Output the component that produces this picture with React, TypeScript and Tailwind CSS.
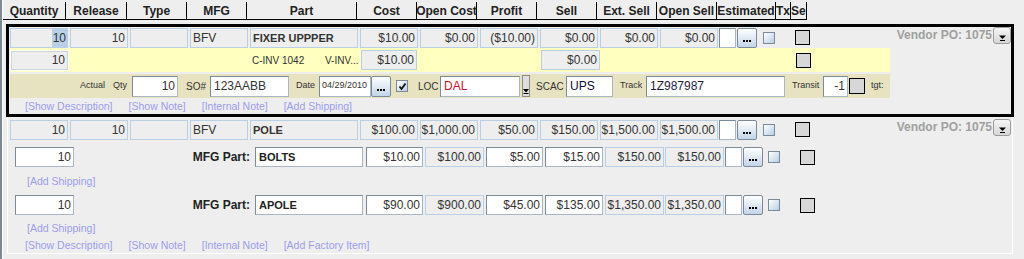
import React from "react";

const FONT = "font-['Liberation_Sans',Arial,sans-serif]";

interface BoxProps {
  w: string;
  children?: React.ReactNode;
  left?: boolean;
  bold?: boolean;
}

// gray read-only cell with light blue border
const Cell: React.FC<BoxProps> = ({ w, children, left, bold }) => (
  <div
    className={`${w} h-[20px] shrink-0 border border-[#b8cfe5] bg-[#eeeeee] flex items-center whitespace-nowrap overflow-hidden text-[#333] ${
      left ? "justify-start pl-[2px]" : "justify-end pr-[2px]"
    } ${bold ? "text-[11px] font-bold" : "text-[12px]"}`}
  >
    {children}
  </div>
);

// white editable field
const Field: React.FC<BoxProps & { h?: string; extra?: string }> = ({ w, children, left, bold, h = "h-[20px]", extra = "" }) => (
  <div
    className={`${w} ${h} shrink-0 bg-white border border-[#7a8a99] border-r-[#a9b6c3] border-b-[#a9b6c3] flex items-center whitespace-nowrap overflow-hidden ${
      left ? "justify-start pl-[3px]" : "justify-end pr-[2px]"
    } ${bold ? "text-[11px] font-bold text-[#222]" : "text-[12px] text-[#333]"} ${extra}`}
  >
    {children}
  </div>
);

const DotsButton: React.FC<{ h?: string }> = ({ h = "h-[20px]" }) => (
  <div
    className={`w-[20px] ${h} shrink-0 rounded-[2px] border border-[#7a8a99] bg-linear-to-b from-white to-[#c3d5e9] flex items-end justify-center pb-[5px] gap-[1px]`}
  >
    <span className="w-[2px] h-[2px] bg-black" />
    <span className="w-[2px] h-[2px] bg-black" />
    <span className="w-[2px] h-[2px] bg-black" />
  </div>
);

const CheckBox: React.FC<{ checked?: boolean }> = ({ checked }) => (
  <div className="w-[12px] h-[12px] shrink-0 border border-[#7a8a99] bg-linear-to-br from-white to-[#b8cfe5] flex items-center justify-center">
    {checked && (
      <svg width="9" height="9" viewBox="0 0 9 9">
        <path d="M1.5 4.5 L3.5 7 L7.5 1.5" stroke="#111" strokeWidth="1.8" fill="none" />
      </svg>
    )}
  </div>
);

const GraySquare: React.FC<{ size?: string }> = ({ size = "w-[15px] h-[15px]" }) => (
  <div className={`${size} shrink-0 border border-black bg-[#d7d7d7]`} />
);

const VendorDrop: React.FC = () => (
  <div className="w-[18px] h-[17px] mt-[-1px] shrink-0 rounded-[3px] border border-[#9c9c9c] bg-linear-to-b from-[#f6f6f6] to-[#d6d6d6] flex items-end justify-center pb-[2px]">
    <svg width="9" height="6" viewBox="0 0 9 6">
      <path d="M1 0.5 H8 L4.5 4 Z" fill="#000" />
      <rect x="2" y="5" width="5" height="1" fill="#000" />
    </svg>
  </div>
);

const Vendor: React.FC = () => (
  <div className="ml-auto flex items-start gap-[1px]">
    <span className="text-[12px] leading-[14px] font-bold text-[#a0a0a0] whitespace-nowrap">Vendor PO: 1075</span>
    <VendorDrop />
  </div>
);

const LINK = "text-[10.5px] leading-[14px] text-[#9c9cf0] whitespace-nowrap";

const HEADERS: { label: string; w: string; left?: boolean }[] = [
  { label: "Quantity", w: "w-[63px]" },
  { label: "Release", w: "w-[61px]" },
  { label: "Type", w: "w-[60px]" },
  { label: "MFG", w: "w-[60px]" },
  { label: "Part", w: "w-[110px]" },
  { label: "Cost", w: "w-[60px]" },
  { label: "Open Cost", w: "w-[60px]" },
  { label: "Profit", w: "w-[60px]" },
  { label: "Sell", w: "w-[60px]" },
  { label: "Ext. Sell", w: "w-[60px]" },
  { label: "Open Sell", w: "w-[60px]" },
  { label: "Estimated", w: "w-[59px]" },
  { label: "Tx", w: "w-[15px]", left: true },
  { label: "Se", w: "w-[16px]", left: true },
];

const Header: React.FC = () => (
  <div className="flex h-[20px] w-[804px] pt-[2px] border-b border-black shrink-0">
    {HEADERS.map((h) => (
      <div
        key={h.label}
        className={`${h.w} h-full shrink-0 border-r border-black flex items-center text-[12px] font-bold text-[#222] whitespace-nowrap ${
          h.left ? "justify-start" : "justify-center"
        }`}
      >
        {h.label}
      </div>
    ))}
  </div>
);

interface LineProps {
  qty: React.ReactNode;
  release: string;
  mfg: string;
  part: string;
  values: string[];
}

const ItemRow: React.FC<LineProps> = ({ qty, release, mfg, part, values }) => (
  <div className="flex items-start h-[20px] shrink-0">
    <div className="flex gap-[2px]">
      {qty}
      <Cell w="w-[58px]">{release}</Cell>
      <Cell w="w-[58px]" />
      <Cell w="w-[58px]" left>
        {mfg}
      </Cell>
      <Cell w="w-[108px]" left bold>
        {part}
      </Cell>
      {values.map((v, i) => (
        <Cell key={i} w="w-[58px]">
          {v}
        </Cell>
      ))}
    </div>
    <div className="ml-[1px]">
      <Field w="w-[17px]" />
    </div>
    <div className="ml-[1px]">
      <DotsButton />
    </div>
    <div className="ml-[6px] mt-[4px]">
      <CheckBox />
    </div>
    <div className="ml-[20px] mt-[2px]">
      <GraySquare />
    </div>
    <Vendor />
  </div>
);

interface SubProps {
  part: string;
  cost: string;
  openCost: string;
  profit: string;
  sell: string;
  ext: string;
  open: string;
}

const SubRow: React.FC<SubProps> = ({ part, cost, openCost, profit, sell, ext, open }) => (
  <div className="flex items-center h-[20px] shrink-0">
    <div className="ml-[7px]">
      <Field w="w-[59px]">10</Field>
    </div>
    <span className="w-[181px] pr-[5px] text-right text-[12px] font-bold text-[#222] whitespace-nowrap">MFG Part:</span>
    <Field w="w-[108px]" left bold>
      {part}
    </Field>
    <div className="ml-[3px]">
      <Field w="w-[57px]">{cost}</Field>
    </div>
    <div className="ml-[2px]">
      <Cell w="w-[59px]">{openCost}</Cell>
    </div>
    <div className="ml-[2px]">
      <Field w="w-[57px]">{profit}</Field>
    </div>
    <div className="ml-[2px]">
      <Field w="w-[58px]">{sell}</Field>
    </div>
    <div className="ml-[2px]">
      <Cell w="w-[59px]">{ext}</Cell>
    </div>
    <div className="ml-[1px]">
      <Cell w="w-[59px]">{open}</Cell>
    </div>
    <div className="ml-[1px]">
      <Field w="w-[17px]" />
    </div>
    <div className="ml-[1px]">
      <DotsButton />
    </div>
    <div className="ml-[5px]">
      <CheckBox />
    </div>
    <div className="ml-[20px]">
      <GraySquare />
    </div>
  </div>
);

const Label: React.FC<{ w?: string; pl?: string; big?: boolean; children: React.ReactNode }> = ({ w = "", pl = "", big, children }) => (
  <span className={`${w} ${pl} shrink-0 whitespace-nowrap text-[#333] ${big ? "text-[10px]" : "text-[9px]"}`}>{children}</span>
);

const SelectedBlock: React.FC = () => (
  <div className="ml-[3px] mt-[4px] w-[1008px] h-[93px] shrink-0 border-[3px] border-black flex flex-col">
    <div className="mt-[1px] pl-[1px]">
      <ItemRow
        qty={
          <div className="w-[58px] h-[20px] shrink-0 border border-[#b8cfe5] bg-[#eeeeee] flex justify-end text-[12px] text-[#333]">
            <span className="h-full px-[1px] bg-[#b8cfe5] flex items-center">10</span>
          </div>
        }
        release="10"
        mfg="BFV"
        part="FIXER UPPPER"
        values={["$10.00", "$0.00", "($10.00)", "$0.00", "$0.00", "$0.00"]}
      />
    </div>

    <div className="ml-[1px] w-[880px] h-[24px] shrink-0 bg-[#ffffbf] flex items-center">
      <div className="ml-[1px] w-[57px] h-[19px] shrink-0 border border-[#c9d6e2] outline outline-[#fffff0] bg-[#eeeeee] flex items-center justify-end pr-[2px] text-[12px] text-[#333]">
        10
      </div>
      <span className="ml-[184px] w-[73px] shrink-0 text-[10px] text-[#333] whitespace-nowrap">C-INV 1042</span>
      <span className="w-[36px] shrink-0 text-[10px] text-[#333] whitespace-nowrap">V-INV...</span>
      <Cell w="w-[56px]">$10.00</Cell>
      <div className="ml-[124px]">
        <Cell w="w-[59px]">$0.00</Cell>
      </div>
      <div className="ml-[196px]">
        <GraySquare />
      </div>
    </div>

    <div className="mt-[2px] ml-[1px] w-[880px] h-[24px] shrink-0 bg-[#e7e2c0] flex items-center">
      <Label w="w-[33px]" pl="ml-[70px]">
        Actual
      </Label>
      <Label w="w-[19px]">Qty</Label>
      <Field w="w-[46px]" h="h-[21px]">
        10
      </Field>
      <Label w="w-[32px]" pl="pl-[8px]" big>
        SO#
      </Label>
      <Field w="w-[79px]" h="h-[21px]" left>
        123AABB
      </Field>
      <Label w="w-[30px]" pl="pl-[7px]">
        Date
      </Label>
      <Field w="w-[52px]" h="h-[21px]" extra="!text-[9px] !pl-[2px]" left>
        04/29/2010
      </Field>
      <DotsButton h="h-[21px]" />
      <div className="ml-[5px]">
        <CheckBox checked />
      </div>
      <Label w="w-[32px]" pl="pl-[10px]" big>
        LOC
      </Label>
      <Field w="w-[80px]" h="h-[21px]" extra="!text-[#d0102a]" left>
        DAL
      </Field>
      <div className="ml-[2px] w-[8px] h-[22px] shrink-0 border border-[#8c8c8c] bg-[#dedede] flex items-end justify-center pb-[2px]">
        <svg width="6" height="5" viewBox="0 0 6 5">
          <path d="M0 0 H6 L3 3.5 Z" fill="#000" />
          <rect x="0.5" y="4" width="5" height="1" fill="#000" />
        </svg>
      </div>
      <Label w="w-[36px]" pl="pl-[6px]" big>
        SCAC
      </Label>
      <Field w="w-[47px]" h="h-[21px]" extra="!text-[#0c0c4a]" left>
        UPS
      </Field>
      <Label w="w-[33px]" pl="pl-[7px]">
        Track
      </Label>
      <Field w="w-[139px]" h="h-[21px]" extra="!text-[#1c1c3c]" left>
        1Z987987
      </Field>
      <Label w="w-[38px]" pl="pl-[7px]">
        Transit
      </Label>
      <Field w="w-[25px]" h="h-[21px]">
        -1
      </Field>
      <div className="ml-[1px]">
        <GraySquare size="w-[16px] h-[16px]" />
      </div>
      <Label pl="pl-[6px]">tgt:</Label>
    </div>

    <div className="h-[16px] ml-[16px] flex items-center gap-[16px] shrink-0">
      <span className={LINK}>[Show Description]</span>
      <span className={LINK}>[Show Note]</span>
      <span className={LINK}>[Internal Note]</span>
      <span className={LINK}>[Add Shipping]</span>
    </div>
  </div>
);

const PlainBlock: React.FC = () => (
  <div className="ml-[4px] w-[1006px] shrink-0 border-l border-r border-b border-white flex flex-col pr-[1px]">
    <div className="pt-[3px] pl-[2px]">
      <ItemRow
        qty={<Cell w="w-[58px]">10</Cell>}
        release="10"
        mfg="BFV"
        part="POLE"
        values={["$100.00", "$1,000.00", "$50.00", "$150.00", "$1,500.00", "$1,500.00"]}
      />
    </div>
    <div className="mt-[7px]">
      <SubRow part="BOLTS" cost="$10.00" openCost="$100.00" profit="$5.00" sell="$15.00" ext="$150.00" open="$150.00" />
    </div>
    <div className="h-[28px] ml-[19px] flex items-center">
      <span className={LINK}>[Add Shipping]</span>
    </div>
    <SubRow part="APOLE" cost="$90.00" openCost="$900.00" profit="$45.00" sell="$135.00" ext="$1,350.00" open="$1,350.00" />
    <div className="mt-[5px] h-[16px] ml-[19px] flex items-center">
      <span className={LINK}>[Add Shipping]</span>
    </div>
    <div className="mt-[1px] h-[16px] ml-[17px] flex items-center gap-[16px]">
      <span className={LINK}>[Show Description]</span>
      <span className={LINK}>[Show Note]</span>
      <span className={LINK}>[Internal Note]</span>
      <span className={LINK}>[Add Factory Item]</span>
    </div>
  </div>
);

export default function App() {
  return (
    <div className={`w-[1024px] h-[259px] overflow-hidden bg-[#eeeeee] ${FONT} text-[#333]`}>
      <div className="h-full border-l-2 border-[#7d8894]">
        <div className="h-full border-l border-white flex flex-col">
          <Header />
          <SelectedBlock />
          <PlainBlock />
        </div>
      </div>
    </div>
  );
}
